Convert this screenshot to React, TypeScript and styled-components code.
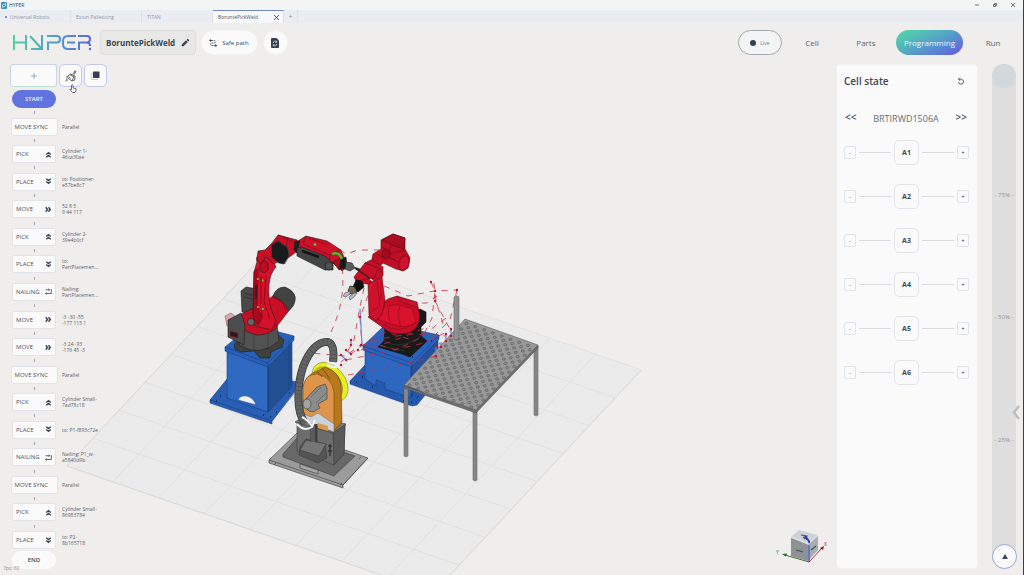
import React from "react";
import styled, { createGlobalStyle, css } from "styled-components";

const ink = "#3d4654";
const line = "#e2e4ea";

const GlobalStyle = createGlobalStyle`
  *, *::before, *::after { box-sizing: border-box; }
  body { margin: 0; background: #efeeec; color: ${ink}; font-family: "Open Sans", "Noto Sans", sans-serif; }
  button, input { font: inherit; color: inherit; }
  button { margin: 0; padding: 0; border: 0; background: none; cursor: pointer; }
  a { color: inherit; text-decoration: none; }
  svg { display: block; }
`;

const Window = styled.div`
  position: relative;
  display: flex;
  flex-direction: column;
  min-height: 100vh;
  overflow: hidden;
  border-right: 1px solid #3b3f47;
  background: #efeeec;
`;

/* ---------- window chrome ---------- */

const TitleBar = styled.div`
  display: flex;
  align-items: center;
  gap: 2px;
  height: 10px;
  padding: 0 1px;
  background: #f2f5f4;
  font-size: 5px;
  line-height: 10px;
`;

const WindowControls = styled.div`
  display: flex;
  margin-left: auto;
`;

const WindowButton = styled.button`
  display: grid;
  place-items: center;
  width: 18px;
  height: 10px;
`;

const TabBar = styled.nav`
  display: flex;
  height: 13px;
  background: #e9edf2;
`;

const Tab = styled.a<{ $active?: boolean }>`
  display: flex;
  align-items: center;
  gap: 3px;
  width: 71px;
  padding: 0 4px 0 5px;
  border-right: 1px solid #dde1e7;
  border-top: 1px solid transparent;
  color: #92979f;
  font-size: 5px;
  line-height: 11px;
  white-space: nowrap;
  ${(p) =>
    p.$active &&
    css`
      border-top-color: #7387cf;
      background: #f6f8f9;
      color: #4f5660;
    `}
`;

const UnsavedDot = styled.span`
  width: 2px;
  height: 2px;
  border-radius: 50%;
  background: #5468e0;
`;

const TabClose = styled.button`
  margin-left: auto;
`;

const NewTab = styled.button`
  width: 14px;
  border-right: 1px solid #dde1e7;
  color: #8b9098;
  font-size: 7px;
  line-height: 12px;
`;

/* ---------- header ---------- */

const Header = styled.header`
  display: flex;
  align-items: center;
  padding: 7px 6px 9px 12px;
`;

const ProjectName = styled.button`
  display: flex;
  align-items: center;
  gap: 6px;
  height: 25px;
  margin-left: 8px;
  padding: 0 5px;
  border: 1px solid #dcdcdc;
  border-radius: 4px;
  background: #e8e8e7;
  font-size: 8px;
  font-weight: 700;
`;

const Pill = styled.button`
  display: flex;
  align-items: center;
  justify-content: center;
  gap: 5px;
  min-width: 25px;
  height: 25px;
  margin-left: 5px;
  border: 1px solid #f3f3f3;
  border-radius: 13px;
  background: #fafafa;
  font-size: 6px;
`;

const SafePath = styled(Pill)`
  padding: 0 8px 0 7px;
`;

const LivePill = styled(Pill)`
  width: 44px;
  gap: 4px;
  margin-left: auto;
  border-color: #a4a9af;
  background: #f3f5f4;
  color: #777c84;
  font-size: 5px;
`;

const LiveDot = styled.span`
  width: 6px;
  height: 6px;
  border-radius: 50%;
  background: #35404f;
`;

const MainNav = styled.nav`
  display: flex;
  align-items: center;
  margin-left: 6px;
  gap: 6px;
`;

const NavLink = styled.a<{ $active?: boolean }>`
  display: flex;
  align-items: center;
  justify-content: center;
  min-width: 48px;
  height: 25px;
  padding: 0 8px;
  border-radius: 13px;
  color: #5d646e;
  font-size: 8px;
  ${(p) =>
    p.$active &&
    css`
      background: linear-gradient(155deg, #50d3ab 8%, #55a3c6 50%, #6266df 90%);
      color: #f2f6fb;
    `}
`;

/* ---------- body ---------- */

const Body = styled.main`
  position: relative;
  flex: 1;
  display: flex;
  justify-content: space-between;
  padding: 0 7px 6px 10px;
`;

const Viewport = styled.div`
  position: absolute;
  inset: 0;
  svg { width: 100%; height: 100%; }
`;

const Program = styled.section`
  position: relative;
  display: flex;
  flex-direction: column;
  width: 100px;
`;

const Toolbar = styled.div`
  display: flex;
  gap: 2px;
  margin-bottom: 3px;
`;

const ToolButton = styled.button<{ $wide?: boolean }>`
  display: grid;
  place-items: center;
  width: ${(p) => (p.$wide ? 47 : 23)}px;
  height: 23px;
  flex: none;
  border: 1px solid ${(p) => (p.$wide ? "#cbd3e8" : "#c3c8ee")};
  border-radius: ${(p) => (p.$wide ? 3 : 5)}px;
  ${(p) => p.$wide && "border-bottom-color: #bfe0d6;"}
  background: #fafafa;
`;

const Terminal = styled.button<{ $start?: boolean }>`
  flex: none;
  width: 44px;
  height: 18px;
  margin-left: 2px;
  border-radius: 9px;
  background: ${(p) => (p.$start ? "#6173de" : "#fafafa")};
  color: ${(p) => (p.$start ? "#f1f3ff" : ink)};
  font-size: 6px;
  font-weight: 600;
`;

const Steps = styled.ol`
  flex: 1;
  display: flex;
  flex-direction: column;
  margin: 0 0 2px;
  padding: 0;
  list-style: none;
`;

const Step = styled.li`
  flex: 1;
  display: grid;
  grid-template-columns: 48px 1fr;
  grid-template-rows: 1fr 18px;
  align-items: center;
  column-gap: 4px;
`;

const Connector = styled.span`
  justify-self: center;
  width: 1px;
  height: 3px;
  background: #a3a5aa;
`;

const StepButton = styled.button<{ $wide?: boolean }>`
  grid-row: 2;
  justify-self: center;
  display: flex;
  align-items: center;
  justify-content: space-between;
  width: ${(p) => (p.$wide ? 47 : 44)}px;
  height: 18px;
  padding: 0 3px;
  border: 1px solid ${line};
  border-radius: 2px;
  background: #fafafa;
  color: #4a525e;
  font-size: 6px;
  white-space: nowrap;
`;

const Caption = styled.span`
  grid-row: 2;
  color: #5f6268;
  font-size: 5px;
  line-height: 6px;
  white-space: pre;
`;

const Fps = styled.div`
  position: absolute;
  left: 4px;
  bottom: 3px;
  color: #8d9095;
  font-size: 5px;
  line-height: 8px;
`;

const Pointer = styled.svg`
  position: absolute;
  left: 69px;
  top: 20px;
`;

const RightSide = styled.div`
  position: relative;
  display: flex;
  gap: 14px;
`;

const CellState = styled.section`
  width: 142px;
  padding: 9px 8px 9px 7px;
  border: 1px solid #f2f2f2;
  border-radius: 4px;
  background: #fafafa;
`;

const PanelHead = styled.div`
  display: flex;
  align-items: center;
  justify-content: space-between;
  padding-right: 4px;
`;

const PanelTitle = styled.h2`
  margin: 0;
  font-size: 10px;
  line-height: 14px;
  font-weight: 600;
`;

const RobotPicker = styled.div`
  display: flex;
  align-items: flex-start;
  justify-content: space-between;
  margin: 23px 2px 13px 1px;
  color: #686d74;
`;

const RobotName = styled.span`
  font-size: 9px;
  line-height: 16px;
`;

const PickerButton = styled.button`
  color: ${ink};
  font-weight: 600;
  font-size: 10px;
  line-height: 12px;
`;

const Joints = styled.div`
  display: flex;
  flex-direction: column;
  gap: 19px;
`;

const Joint = styled.div`
  display: grid;
  grid-template-columns: 12px 1fr 25px 1fr 12px;
  align-items: center;
  gap: 3px;
`;

const Rule = styled.span`
  height: 1px;
  background: #dadce0;
`;

const Nudge = styled.button`
  height: 13px;
  border: 1px solid ${line};
  border-radius: 2px;
  font-size: 6px;
  line-height: 10px;
`;

const JointName = styled.button`
  height: 25px;
  border: 1px solid ${line};
  border-radius: 5px;
  font-size: 7px;
  font-weight: 700;
`;

const Speed = styled.div`
  position: relative;
  width: 24px;
`;

const SpeedInput = styled.input`
  position: absolute;
  inset: 0;
  width: 24px;
  height: 100%;
  margin: 0;
  appearance: none;
  writing-mode: vertical-lr;
  direction: rtl;
  border-radius: 12px;
  background: #dedede;
  &::-webkit-slider-thumb {
    appearance: none;
    width: 24px;
    height: 24px;
    border-radius: 50%;
    background: #d3d8dc;
  }
`;

const Marks = styled.div`
  position: absolute;
  inset: 8px 0 7px;
  pointer-events: none;
`;

const Mark = styled.span<{ $at: number }>`
  position: absolute;
  top: ${(p) => 100 - p.$at}%;
  left: 0;
  right: 0;
  margin-top: -5px;
  color: #939598;
  font-size: 6px;
  line-height: 10px;
  text-align: center;
  white-space: nowrap;
`;

const UpButton = styled.button`
  position: absolute;
  left: 0;
  bottom: 0;
  display: grid;
  place-items: center;
  width: 25px;
  height: 25px;
  border: 1px solid #98a6dc;
  border-radius: 50%;
  background: #fafafa;
`;

const DrawerHandle = styled.button`
  position: absolute;
  right: 3px;
  top: 341px;
`;

const Orientation = styled.svg`
  position: absolute;
  right: 194px;
  bottom: 10px;
`;

/* ---------- drawings ---------- */

const Logo = () => (
  <svg width="80" height="17" viewBox="0 0 80 17" fill="none" role="img" aria-label="HYPER">
    <defs>
      <linearGradient id="brand" gradientUnits="userSpaceOnUse" x1="0" y1="4" x2="80" y2="12">
        <stop offset="0" stopColor="#4fd0a6" />
        <stop offset="0.5" stopColor="#559fc8" />
        <stop offset="1" stopColor="#5c68dc" />
      </linearGradient>
    </defs>
    <g stroke="url(#brand)" strokeWidth="2">
      <path d="M2 1V16M2 8.500H13.500M14 1V16" />
      <path d="M18 2L29 14M30 1V15H19" />
      <path d="M36 16V8.500H45Q48 8.500 48 5Q48 2 45 2H35" />
      <path d="M64 2H56Q51 2 51 7V10Q51 15 56 15H64M55 8.500H63" />
      <path d="M67 16V8.500H75Q78 8.500 78 5Q78 2 75 2H66M75 8.500Q78 9 78 12" />
    </g>
    <circle cx="78" cy="15" r="1.200" fill="#5c68dc" />
  </svg>
);

type Direction = "up" | "down" | "right" | "nail";

const StepIcon = ({ kind }: { kind: Direction }) => {
  if (kind === "nail")
    return (
      <svg width="7" height="7" viewBox="0 0 14 14" fill="none" stroke={ink} strokeWidth="1.600">
        <path d="M1 3.500H9M1 11H13M7 1.500L9.500 3.500L7 5.500M12.500 2V11M3.500 9L1 11L3.500 13" />
      </svg>
    );
  const turn = { up: 0, down: 180, right: 90 }[kind];
  return (
    <svg width="7" height="7" viewBox="0 0 14 14" fill="none" stroke={ink} strokeWidth="3">
      <path d="M2.500 7L7 3.500L11.500 7M2.500 12.500L7 9L11.500 12.500" transform={`rotate(${turn} 7 7)`} />
    </svg>
  );
};

const floorLines: string[] = [];
for (let i = 0; i <= 8; i++) {
  floorLines.push(`M${67 + 45.8 * i} ${466 + 15.9 * i}l208 -223`);
  floorLines.push(`M${67 + 26 * i} ${466 - 27.9 * i}l366 127`);
}

const holes: [number, number][] = [];
for (let i = 0; i < 16; i++)
  for (let j = 0; j < 23; j++)
    if ((i + j) % 2 === 0) {
      const a = (i + 0.8) / 16.6;
      const b = (j + 0.8) / 23.6;
      holes.push([465 + 73 * a - 61 * b, 320 + 26 * a + 66 * b]);
    }

const waypoints = [
  [431, 282], [435, 291], [435, 301], [457, 290], [451, 329], [446, 334], [451, 336], [446, 341],
  [441, 347], [436, 346], [436, 356], [351, 340], [351, 345], [346, 350], [351, 354], [341, 355],
  [346, 360], [341, 365], [361, 345], [358, 350], [360, 317], [310, 353],
];

const TablePart = () => (
  <g stroke="#4f4f4f" strokeWidth="0.5">
    <path d="M404 387h4v69l-2 1-2-1zM473 411h4v69l-2 1-2-1zM534 346h4v69l-2 1-2-1z" fill="#8e8e8e" />
    <path d="M406 388V456M475 412V480M536 347V415" stroke="#6b6b6b" />
    <path d="M404 386L476 410L538 345V348L476 413L404 388Z" fill="#6f6f6f" />
    <path d="M465 319L538 345L476 410L404 385Z" fill="#989898" />
    <g fill="#8b8b8b" stroke="#505050" strokeWidth="0.5">
      {holes.map(([x, y], i) => (
        <ellipse key={i} cx={x} cy={y} rx="1.6" ry="1.2" />
      ))}
    </g>
    <path d="M454 297l2-1h2l1 1v42l-3 1-2-1z" fill="#979797" />
    <path d="M457 297V339" stroke="#777" />
  </g>
);

const LeftRobot = () => (
  <g strokeLinejoin="round">
    <g stroke="#173f7c" strokeWidth="0.6">
      <path d="M210 400L236 368L301 383L272 421V424L210 403Z" fill="#2a5eb4" />
      <path d="M210 400L272 421L300 386" fill="none" />
      <path d="M227 350L268 365V412L227 398Z" fill="#2f69c2" />
      <path d="M268 365L292 340V387L268 412Z" fill="#234f93" />
      <path d="M225 347L252 325L294 336V340L268 367L225 351Z" fill="#2a60b8" />
      <path d="M225 347L268 363L294 336M268 363V412M289 343V390" fill="none" />
      <path d="M238 400Q240 395 247 396Q254 398 256 405Z" fill="#eef1f3" stroke="#1e4787" />
      <path d="M216 401h1M220 396h1M270 417h1M276 412h1M289 393h1M263 415h1" stroke="#0d2750" strokeWidth="1.4" />
    </g>
    <g stroke="#1c1c1c" strokeWidth="0.6">
      <path d="M234 345L243 334L275 332L284 340L282 347L271 352L270 358L260 358L254 351L241 352L235 349Z" fill="#3f413f" />
      <path d="M243 325L277 325L279 341Q260 358 239 345Z" fill="#515251" />
      <path d="M254 334V351M268 333V350" stroke="#383838" fill="none" />
      <path d="M241 291L246 287L257 289V315L242 312Z" fill="#484a49" />
      <path d="M244 293L256 296M244 297L256 300" stroke="#272727" />
      <path d="M225 316L231 313L236 317L234 324L227 326Z" fill="#dfa7ad" stroke="#8d6266" />
      <path d="M240 315L251 309L275 316L277 327Q270 335 257 335Q246 333 241 326Z" fill="#c50f24" />
      <path d="M228 320L241 313L245 325L244 345L228 337Z" fill="#4d4d4d" />
      <path d="M230 331l8 2v5l-8-2z" fill="#281a1c" stroke="#93222c" />
      <path d="M269 299L278 292L291 308L277 326L264 318Z" fill="#c90f26" />
      <path d="M273 296Q276 287 285 287Q297 292 295 301Q293 309 288 310Q284 300 273 296Z" fill="#424443" />
      <path d="M272 297Q286 301 286 314" fill="none" stroke="#6d0814" />
      <path d="M257 262Q255 256 261 254L273 261L276 267Q270 273 269 285Q268 303 273 314L276 321L272 330L255 326L253 314L254 272Z" fill="#d4102a" />
      <path d="M254 272L258 268L257 306L262 318L258 325L253 318Z" fill="#a70a1e" stroke="#5d0711" />
      <path d="M260 264Q264 257 268 264V270Q264 275 260 270Z" fill="#bb0c21" />
      <path d="M266 276L264 302L270 319M261 276L261 304M262 309v9" fill="none" stroke="#5d0711" />
      <circle cx="251" cy="322" r="3.5" fill="#666" />
      <path d="M256 285V299" stroke="#222" strokeWidth="1.8" />
      <path d="M257 259L258 251L265 250L272 243L278 235L297 240L299 250L288 258L273 264L266 256L261 264Z" fill="#c90f26" />
      <path d="M278 235L288 238L286 247M283 238L297 243" fill="none" stroke="#6d0814" />
      <path d="M272 245L278 241L287 247L289 255L284 264L279 263L272 257Z" fill="#191b1d" />
      <path d="M279 242L288 248L289 256L285 264" stroke="#4c4e50" fill="none" />
      <path d="M298 241L306 236L327 241L341 250L346 262L338 267L325 257L297 250Z" fill="#cf1029" />
      <path d="M306 236L303 244L330 255L341 250M309 238L328 245M330 255L329 262" fill="none" stroke="#6d0814" />
      <path d="M295 241L300 241L297 253L294 250Z" fill="#1f1f1f" />
      <path d="M297 248L302 247L325 256L333 263L333 270L325 270L297 256Z" fill="#434544" />
      <path d="M302 251L319 257" stroke="#161616" strokeWidth="2.4" />
      <ellipse cx="329" cy="266" rx="4" ry="4" fill="#4f5150" />
      <path d="M333 262L340 258L345 266L339 270Z" fill="#b20c20" />
      <path d="M341 259L346 257L347 267L342 271L339 268Z" fill="#16191a" />
      <path d="M346 262L352 263L355 268L350 271L345 269Z" fill="#5a5c5b" />
      <path d="M355 268L363 271L371 279" stroke="#2b2b2b" strokeWidth="2" fill="none" />
    </g>
    <path d="M332 254Q339 251 342 259" stroke="#37c536" strokeWidth="2.4" fill="none" />
    <path d="M257 279h1.500M262 280.500h1.500M257 307h1.500M262 309h1.500M314 245l2-1" stroke="#49e23f" strokeWidth="2" />
    <path d="M370 279L373 281" stroke="#fff" strokeWidth="1.500" />
  </g>
);

const RightRobot = () => (
  <g strokeLinejoin="round">
    <g stroke="#173f7c" strokeWidth="0.6">
      <path d="M350 381L366 364L426 394L417 405L412 406L350 384Z" fill="#2659ae" />
      <path d="M365 349L411 365V398L385 389V383L376 380V386L365 379Z" fill="#2e67c0" />
      <path d="M411 365L438 338V364L411 397Z" fill="#2452a0" />
      <path d="M363 346L386 324L439 335V339L412 367L363 350Z" fill="#2b62bd" />
      <path d="M363 346L412 363L439 335M412 363V397" fill="none" />
      <path d="M356 382h1M362 377h1M372 387h1M403 401h1M411 402h1M417 397h1M431 341h1M412 357h1" stroke="#0d2750" strokeWidth="1.4" />
    </g>
    <g stroke="#0d0d0d" strokeWidth="0.6">
      <path d="M385 327L420 309L426 312V322L421 327L421 336L427 341L410 357L402 354L378 347L384 341Z" fill="#191b1a" />
      <path d="M383 340Q400 352 422 335M380 346L405 351" stroke="#3c3e3d" fill="none" />
      <g stroke="#5e0712">
        <path d="M380 305L388 299L397 296L417 302L420 316Q419 329 409 333Q392 336 385 329L368 317Z" fill="#c50f28" />
        <path d="M383 308Q393 301 412 309L416 322Q407 330 391 324L377 319Z" fill="#db122c" stroke="#8d0a1c" />
        <path d="M390 305Q386 313 391 323M400 306Q396 315 401 327M397 296L401 302L418 308M383 324Q398 336 417 322" fill="none" stroke="#8d0a1c" />
        <path d="M368 282L382 277L385 301L382 314L376 321L369 315Z" fill="#d0112a" />
        <path d="M377 281L380 306L371 312M381 281V300" fill="none" stroke="#8d0a1c" />
        <path d="M393 234L405 238L405 249L410 258L408 268L403 271L396 269L383 263L378 268L371 264L373 254L381 249V240Z" fill="#bf0f25" />
        <path d="M393 234L405 238L404 249L392 245L382 240Z" fill="#a80d20" />
        <path d="M391 244L389 254L405 250M383 247L390 258L399 262M377 254L384 258" fill="none" />
        <ellipse cx="404" cy="263" rx="5" ry="7.500" fill="#cf122d" transform="rotate(18 404 263)" />
        <ellipse cx="386" cy="254" rx="4" ry="5" fill="#a20a1d" />
        <path d="M365 263L371 260L383 267L383 276L368 284L357 283L354 277Z" fill="#c61028" />
        <path d="M365 263L379 268L374 278L357 281M379 268L383 275" fill="none" />
      </g>
      <path d="M356 280L362 281L364 287L358 292L352 289Z" fill="#111" />
      <path d="M350 286L355 287L357 292L351 294L348 291Z" fill="#746c51" />
      <path d="M350 291L345 293L343 296L346 297L350 294ZM354 293L349 297L350 300L354 297L357 293Z" fill="#b5b8c4" stroke="#4d5059" />
    </g>
    <path d="M356 269L364 274L372 280" stroke="#242424" strokeWidth="1.4" fill="none" />
    <path d="M370 279L373 281" stroke="#f5f5f5" strokeWidth="1.400" />
  </g>
);

const hose = "M305 423C296 412 297 385 303 367C309 351 318 341 328 342C334 344 334 354 333 362";

const Positioner = () => (
  <g strokeLinejoin="round" stroke="#3a3a3a" strokeWidth="0.6">
    <path d="M269 460L297 433L368 458L343 485V488L269 463Z" fill="#9b9b9b" />
    <path d="M269 460L343 485L368 458" fill="none" />
    <path d="M283 454L298 437L355 456L336 474L334 476L283 457Z" fill="#686868" />
    <path d="M300 464l18 6v4l-18-6zM274 465l2-2M340 485l2-2M359 459l2-2" fill="#a5a5a5" />
    <path d="M297 422L333 432L345 424L344 454L334 465L297 451Z" fill="#6c6c6c" />
    <path d="M333 433L345 424L344 454L334 465Z" fill="#595959" />
    <path d="M295 422L306 415L346 424L333 433Z" fill="#7a7a7a" />
    <path d="M300 447L306 439L325 444L327 458L318 463L299 455Z" fill="#545454" />
    <path d="M306 440L326 444L319 456L300 450Z" fill="#767676" />
    <ellipse cx="330" cy="382" rx="15" ry="22" transform="rotate(-38 330 382)" fill="#e5ee22" stroke="#8b9213" />
    <ellipse cx="328" cy="383" rx="12" ry="18" transform="rotate(-38 328 383)" fill="#cfb921" stroke="#8b9213" />
    <path d="M303 416V387Q307 373 318 371L325 367Q340 372 341 386L342 422L333 432L304 421Z" fill="#b8781c" stroke="#5f3c0e" />
    <path d="M303 416V387Q305 374 317 374Q332 377 334 392V431L304 421Z" fill="#de9549" stroke="#6e471a" />
    <path d="M317 371L322 377M322 368L330 379" stroke="#53360f" />
    <path d="M304 414L311 417L318 413L334 424V432L304 421Z" fill="#cdd1da" stroke="#777" />
    <path d="M318 423l10 3v5l-10-3z" fill="#df9846" stroke="none" />
    <path d="M309 411L305 407L304 401L317 387L325 384L327 388V399L318 404L320 408L313 412Z" fill="#8b8c8c" />
    <ellipse cx="307" cy="404" rx="4" ry="5" fill="#a2a3a3" />
    <path d="M311 397L321 387M316 403L326 393" stroke="#555" />
    <path d={hose} fill="none" stroke="#3c3e3d" strokeWidth="8" />
    <path d={hose} fill="none" stroke="#4b4d4c" strokeWidth="7" />
    <path d={hose} fill="none" stroke="#626463" strokeWidth="6" strokeDasharray="3.200 0.600" />
    <path d="M314 424V442" stroke="#3f4140" strokeWidth="7" />
    <path d="M313 424V442" stroke="#5a5c5b" strokeWidth="4" />
    <path d="M297 424Q304 432 312 427L315 420M302 417Q308 420 312 426M327 361Q333 366 339 362L338 366Q332 369 327 364" fill="none" stroke="#f0f3f8" strokeWidth="2" />
    <path d="M330 444v12M332 446h-4M332 451h-4" stroke="#252525" strokeWidth="1.200" />
  </g>
);

const Scene = () => (
  <svg viewBox="0 64 1023 511" preserveAspectRatio="xMidYMax slice" aria-label="Robot cell">
    <path d="M67 466L275 243L641 370L433 593Z" fill="#ebebeb" />
    <path d={floorLines.join("")} stroke="#dcdcdc" strokeWidth="0.7" fill="none" />
    <path d="M275 243L67 466L433 593L641 370" fill="none" stroke="#d3d3d3" strokeWidth="0.6" />
    <LeftRobot />
    <RightRobot />
    <TablePart />
    <g fill="none" stroke="#cf2a3c" strokeWidth="0.8" strokeDasharray="6 6">
      <path d="M330 243L346 254L358 250L384 250" />
      <path d="M342 268Q346 300 331 332" />
      <path d="M364 288L359 312L354 340L345 356L310 353" />
      <path d="M372 284L360 318L362 344L344 357" />
      <path d="M384 286L408 296L434 291L457 290" />
      <path d="M434 283L436 301L445 330" />
      <path d="M431 282L435 291L432 318L424 334" />
      <path d="M435 301L452 333M457 290L450 320L436 334L441 347" />
      <path d="M410 303L427 303L437 296M446 318L430 330" />
      <path d="M361 346L385 338L410 334L446 336" />
      <path d="M361 350L390 342L430 326" />
      <path d="M346 360L384 352L420 344L452 330" />
      <path d="M348 375L400 365L436 356" />
      <path d="M341 362L361 346L386 332L412 340" />
      <path d="M380 345L396 350L420 338" />
    </g>
    <g stroke="#6f86d8" strokeWidth="1.200">
      <path d="M360 310V309L362 345M351 340v5M346 350l5 4M341 355l5 5M446 334v7M451 329v7M441 342v5M436 346v8" />
    </g>
    <g fill="#c1152b">
      {waypoints.map(([x, y], i) => (
        <circle key={i} cx={x} cy={y} r="1.200" />
      ))}
    </g>
    <Positioner />
  </svg>
);

const steps: { name: string; icon?: Direction; note: string }[] = [
  { name: "MOVE SYNC", note: "Parallel" },
  { name: "PICK", icon: "up", note: "Cylinder 1-\n46ca30ae" },
  { name: "PLACE", icon: "down", note: "to: Positioner-\ne57be8c7" },
  { name: "MOVE", icon: "right", note: "52 8 5\n9 44 117" },
  { name: "PICK", icon: "up", note: "Cylinder 2-\n39e4b0cf" },
  { name: "PLACE", icon: "down", note: "to:\nPartPlacemen..." },
  { name: "NAILING", icon: "nail", note: "Nailing:\nPartPlacemen..." },
  { name: "MOVE", icon: "right", note: "-3 -30 -55\n-177 115 1" },
  { name: "MOVE", icon: "right", note: "-3 24 -93\n-176 45 -3" },
  { name: "MOVE SYNC", note: "Parallel" },
  { name: "PICK", icon: "up", note: "Cylinder Small-\n7ad78c18" },
  { name: "PLACE", icon: "down", note: "to: P1-f893c72e" },
  { name: "NAILING", icon: "nail", note: "Nailing: P1_w-\na5840d9b" },
  { name: "MOVE SYNC", note: "Parallel" },
  { name: "PICK", icon: "up", note: "Cylinder Small-\n86983784" },
  { name: "PLACE", icon: "down", note: "to: P2-\n8b165718" },
];

const joints = ["A1", "A2", "A3", "A4", "A5", "A6"];

const ProgramPanel = () => (
  <Program>
    <Toolbar>
      <ToolButton $wide aria-label="Add step">
        <svg width="6" height="6" viewBox="0 0 6 6" stroke="#71a3bd" strokeWidth="0.800"><path d="M3 0V6M0 3H6" /></svg>
      </ToolButton>
      <ToolButton aria-label="Clean up">
        <svg width="12" height="12" viewBox="0 0 24 24" fill="none" stroke="#333" strokeWidth="1.500" strokeLinejoin="round">
          <path d="M22 2L18.500 9M20 1L16 8.500M11 8L20 12L19.500 20L15 22M11 8L3 14L14 22L17.500 14M10 10L18.500 14M6.500 13L11 17M2 18L5 19M1 21.500H5" />
        </svg>
      </ToolButton>
      <ToolButton aria-label="Duplicate">
        <svg width="9" height="9" viewBox="0 0 18 18">
          <rect x="1" y="5" width="12" height="12" rx="1" fill="none" stroke="#9aa0a8" strokeWidth="1" />
          <rect x="4" y="1" width="13" height="13" rx="1" fill="#333d4b" />
        </svg>
      </ToolButton>
    </Toolbar>
    <Terminal $start>START</Terminal>
    <Steps>
      {steps.map((step, i) => (
        <Step key={i}>
          <Connector />
          <StepButton $wide={!step.icon}>
            {step.name}
            {step.icon && <StepIcon kind={step.icon} />}
          </StepButton>
          <Caption>{step.note}</Caption>
        </Step>
      ))}
    </Steps>
    <Terminal>END</Terminal>
  </Program>
);

export default function App() {
  return (
    <Window>
      <GlobalStyle />
      <TitleBar>
        <svg width="6" height="7" viewBox="0 0 12 14">
          <rect width="12" height="14" rx="2" fill="#3f8fc4" />
          <path d="M3 11V6L9 3V8Z" fill="none" stroke="#c9f2ef" strokeWidth="1.600" />
        </svg>
        HYPER
        <WindowControls>
          <WindowButton aria-label="Minimize">
            <svg width="4" height="4" viewBox="0 0 4 4" stroke="#444"><path d="M0 2H4" strokeWidth="0.700" /></svg>
          </WindowButton>
          <WindowButton aria-label="Restore">
            <svg width="4" height="4" viewBox="0 0 8 8" stroke="#333" fill="none" strokeWidth="1.300"><path d="M1 3H5V7H1ZM3 3V1H7V5H5" /></svg>
          </WindowButton>
          <WindowButton aria-label="Close">
            <svg width="4" height="4" viewBox="0 0 8 8" stroke="#333" strokeWidth="1.300"><path d="M0 0L8 8M8 0L0 8" /></svg>
          </WindowButton>
        </WindowControls>
      </TitleBar>
      <TabBar>
        <Tab href="#universal"><UnsavedDot />Universal Robots</Tab>
        <Tab href="#estun">Estun Palletizing</Tab>
        <Tab href="#titan">TITAN</Tab>
        <Tab href="#borunte" $active>
          BoruntePickWeld
          <TabClose aria-label="Close tab">
            <svg width="5" height="5" viewBox="0 0 10 10" stroke="#333" strokeWidth="1.600"><path d="M0 0L10 10M10 0L0 10" /></svg>
          </TabClose>
        </Tab>
        <NewTab aria-label="New tab">+</NewTab>
      </TabBar>

      <Header>
        <Logo />
        <ProjectName>
          BoruntePickWeld
          <svg width="9" height="9" viewBox="0 0 24 24" fill={ink}>
            <path d="M2 17.200V22h4.800L18.200 10.600 13.400 5.800ZM21.600 7.200a1.500 1.500 0 0 0 0-2.100L18.900 2.400a1.500 1.500 0 0 0-2.100 0L14.800 4.400 19.600 9.200Z" />
          </svg>
        </ProjectName>
        <SafePath>
          <svg width="8" height="8" viewBox="0 0 16 16" fill="none" stroke={ink} strokeWidth="1.500">
            <path d="M4 3H11Q13 3 13 5.500Q13 8 10 8H6Q3 8 3 10.500Q3 13 6 13H12" strokeDasharray="4 1" />
            <circle cx="3" cy="3" r="1.600" fill={ink} />
            <circle cx="13.500" cy="13" r="1.600" fill={ink} />
          </svg>
          Safe path
        </SafePath>
        <Pill aria-label="Reload file">
          <svg width="8" height="10" viewBox="0 0 16 20">
            <path d="M2 0H11L16 5V18a2 2 0 0 1-2 2H2a2 2 0 0 1-2-2V2a2 2 0 0 1 2-2Z" fill="#35404f" />
            <path d="M4.500 10A3.500 3.500 0 0 1 11 8M11.500 5.500V8.500H8.500M11.500 12A3.500 3.500 0 0 1 5 14M4.500 16.500V13.500H7.500" fill="none" stroke="#fafafa" strokeWidth="1.400" />
          </svg>
        </Pill>
        <LivePill><LiveDot />Live</LivePill>
        <MainNav>
          <NavLink href="#cell">Cell</NavLink>
          <NavLink href="#parts">Parts</NavLink>
          <NavLink href="#programming" $active>Programming</NavLink>
          <NavLink href="#run">Run</NavLink>
        </MainNav>
      </Header>

      <Body>
        <Viewport><Scene /></Viewport>
        <ProgramPanel />
        <Orientation width="54" height="40" viewBox="0 0 54 40">
          <path d="M16 12L24 5L43 10L33 19Z" fill="#cdd2d7" />
          <path d="M16 12L33 19V36L16 31Z" fill="#8d9295" />
          <path d="M33 19L43 10V25L33 36Z" fill="#a9aeb3" />
          <path d="M16 12L33 19L43 10" fill="none" stroke="#dde1e5" strokeWidth="1.400" />
          <path d="M26 10l6 1-3 3M28 12l5 3M21 25l7 2M36 25l5-4" stroke="#474c52" strokeWidth="1.100" fill="none" />
          <path d="M30 11l4 5v2" stroke="#2336cf" strokeWidth="1.800" fill="none" />
          <path d="M34 20V37" stroke="#3b50dc" strokeWidth="1.200" />
          <path d="M34 37L10 30" stroke="#4c6b38" strokeWidth="1" />
          <path d="M7 29l5-.6-1 3z" fill="#23661f" />
          <path d="M34 37L47 23" stroke="#b32b3c" strokeWidth="1" />
          <path d="M49 21l-1 4-3-2z" fill="#931426" />
          <text x="1" y="29" fontSize="5" fill="#35713a">Y</text>
          <text x="49" y="21" fontSize="5" fill="#b3283a">X</text>
        </Orientation>
        <RightSide>
          <CellState>
            <PanelHead>
              <PanelTitle>Cell state</PanelTitle>
              <button aria-label="Reset">
                <svg width="8" height="8" viewBox="0 0 16 16" fill="none" stroke={ink} strokeWidth="1.700">
                  <path d="M3 4.500H9A5 5 0 1 1 3 10M6 1.500L3 4.500L6 7.500" />
                </svg>
              </button>
            </PanelHead>
            <RobotPicker>
              <PickerButton aria-label="Previous robot">&lt;&lt;</PickerButton>
              <RobotName>BRTIRWD1506A</RobotName>
              <PickerButton aria-label="Next robot">&gt;&gt;</PickerButton>
            </RobotPicker>
            <Joints>
              {joints.map((name) => (
                <Joint key={name}>
                  <Nudge aria-label={`Decrease ${name}`}>-</Nudge>
                  <Rule />
                  <JointName>{name}</JointName>
                  <Rule />
                  <Nudge aria-label={`Increase ${name}`}>+</Nudge>
                </Joint>
              ))}
            </Joints>
          </CellState>
          <Speed>
            <SpeedInput type="range" aria-label="Speed" min={0} max={100} defaultValue={100} />
            <Marks>
              {[75, 50, 25].map((value) => (
                <Mark key={value} $at={value}>- {value}% -</Mark>
              ))}
            </Marks>
            <UpButton aria-label="Expand">
              <svg width="6" height="5" viewBox="0 0 6 5" fill={ink}><path d="M3 0L6 5H0Z" /></svg>
            </UpButton>
          </Speed>
        </RightSide>
        <DrawerHandle aria-label="Open drawer">
          <svg width="8" height="15" viewBox="0 0 8 15" fill="none" stroke="#bcbdbf" strokeWidth="2.400"><path d="M7 1L2 7.500L7 14" /></svg>
        </DrawerHandle>
        <Fps>fps: 60</Fps>
        <Pointer width="8" height="9" viewBox="0 0 16 18">
          <path d="M5 10V2.500Q6.500 0 8 2.500V8L14 9.500V14L12 17H7L2 11Q2 9 5 11Z" fill="#fff" stroke="#333" strokeWidth="1.400" />
        </Pointer>
      </Body>
    </Window>
  );
}
